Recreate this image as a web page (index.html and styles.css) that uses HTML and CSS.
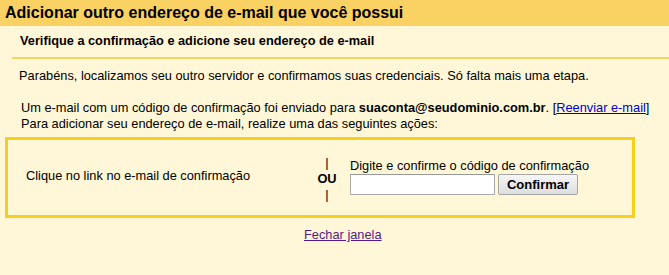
FILE: index.html
```html
<!DOCTYPE html>
<html lang="pt-BR">
<head>
    <meta charset="UTF-8">
    <meta name="viewport" content="width=device-width, initial-scale=1.0">
    <title>Adicionar outro endereço de e-mail</title>
    <link rel="stylesheet" href="styles.css">
</head>
<body>
    <div class="dialog-title">Adicionar outro endereço de e-mail que você possui</div>

    <div class="step-title">Verifique a confirmação e adicione seu endereço de e-mail</div>

    <p class="intro">Parabéns, localizamos seu outro servidor e confirmamos suas credenciais. Só falta mais uma etapa.</p>

    <p class="info">
        Um e-mail com um código de confirmação foi enviado para <b>suaconta@seudominio.com.br</b>. [<a href="#" class="resend">Reenviar e-mail</a>]<br>
        Para adicionar seu endereço de e-mail, realize uma das seguintes ações:
    </p>

    <div class="verify-box">
        <div class="option-link">Clique no link no e-mail de confirmação</div>
        <div class="option-or">
            <span>|</span>
            <b>OU</b>
            <span>|</span>
        </div>
        <div class="option-code">
            <label for="code">Digite e confirme o código de confirmação</label>
            <div class="code-row">
                <input type="text" id="code" class="code-input">
                <button class="confirm-btn">Confirmar</button>
            </div>
        </div>
    </div>

    <div class="close-row">
        <a href="#" class="close-link">Fechar janela</a>
    </div>
</body>
</html>
```

FILE: styles.css
```css
* {
    margin: 0;
    padding: 0;
    box-sizing: border-box;
}

body {
    background-color: #fff7d7;
    color: #000;
    font-family: "Liberation Sans", Arial, sans-serif;
    font-size: 12.8px;
    line-height: 16px;
}

.dialog-title {
    background-color: #fad163;
    height: 26px;
    line-height: 26px;
    padding-left: 5px;
    font-size: 16px;
    font-weight: bold;
}

.step-title {
    margin-left: 12px;
    padding: 7px 8px 9px;
    line-height: 15px;
    font-size: 12.75px;
    font-weight: bold;
    border-bottom: 2px solid #fad163;
}

.intro {
    margin-top: 9px;
    padding-left: 19px;
}

.info {
    margin-top: 16px;
    padding-left: 21px;
}

.resend {
    color: #0000cc;
}

.verify-box {
    display: flex;
    align-items: center;
    width: 630px;
    height: 81px;
    margin: 5px 0 0 5px;
    padding-left: 18px;
    border: 3px solid #f5d01e;
}

.option-link {
    flex: 0 0 291px;
    margin-bottom: 4px;
}

.option-or {
    display: flex;
    flex-direction: column;
    align-items: center;
    width: 20px;
    margin-top: 2px;
}

.option-or span {
    color: #000;
    line-height: 16px;
}

.option-code {
    margin-left: 13px;
    margin-bottom: 2px;
}

.option-code label {
    display: block;
}

.code-row {
    display: flex;
    gap: 3px;
}

.code-input {
    width: 145px;
    height: 21px;
    border: 1px solid #a9a9a9;
    border-top-color: #999;
    background: #fff;
    font-family: inherit;
    font-size: 13px;
}

.confirm-btn {
    width: 80px;
    height: 21px;
    border: 1px solid #a5a5a5;
    border-radius: 2px;
    background: linear-gradient(#f6f6f6, #dedede);
    font-family: inherit;
    font-size: 13px;
    font-weight: bold;
    color: #000;
}

.close-row {
    margin-top: 9px;
    padding-left: 304px;
}

.close-link {
    color: #551a8b;
}
```
